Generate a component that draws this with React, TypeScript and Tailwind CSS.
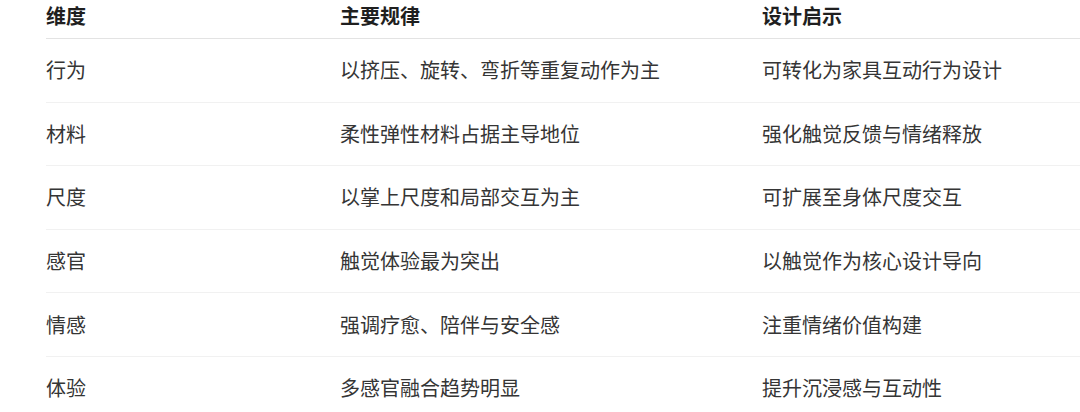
const rows = [
  ['行为', '以挤压、旋转、弯折等重复动作为主', '可转化为家具互动行为设计'],
  ['材料', '柔性弹性材料占据主导地位', '强化触觉反馈与情绪释放'],
  ['尺度', '以掌上尺度和局部交互为主', '可扩展至身体尺度交互'],
  ['感官', '触觉体验最为突出', '以触觉作为核心设计导向'],
  ['情感', '强调疗愈、陪伴与安全感', '注重情绪价值构建'],
  ['体验', '多感官融合趋势明显', '提升沉浸感与互动性'],
];

export default function App() {
  return (
    <div
      className="w-[1080px] h-[412px] overflow-hidden bg-white pl-[46px]"
      style={{ fontFamily: '"Noto Sans CJK SC", "Noto Sans", sans-serif' }}
    >
      {/* header */}
      <div className="grid grid-cols-[294px_422px_1fr] h-[39px] items-center pb-[6px] border-b border-[#e3e3e3] text-[20px] font-bold text-[#1f1f1f]">
        <div>维度</div>
        <div>主要规律</div>
        <div>设计启示</div>
      </div>
      {rows.map((r, i) => (
        <div
          key={i}
          className="grid grid-cols-[294px_422px_1fr] h-[63.6px] items-center border-b border-[#f1f1f1] text-[20px] text-[#353535]"
        >
          <div>{r[0]}</div>
          <div>{r[1]}</div>
          <div>{r[2]}</div>
        </div>
      ))}
    </div>
  );
}
